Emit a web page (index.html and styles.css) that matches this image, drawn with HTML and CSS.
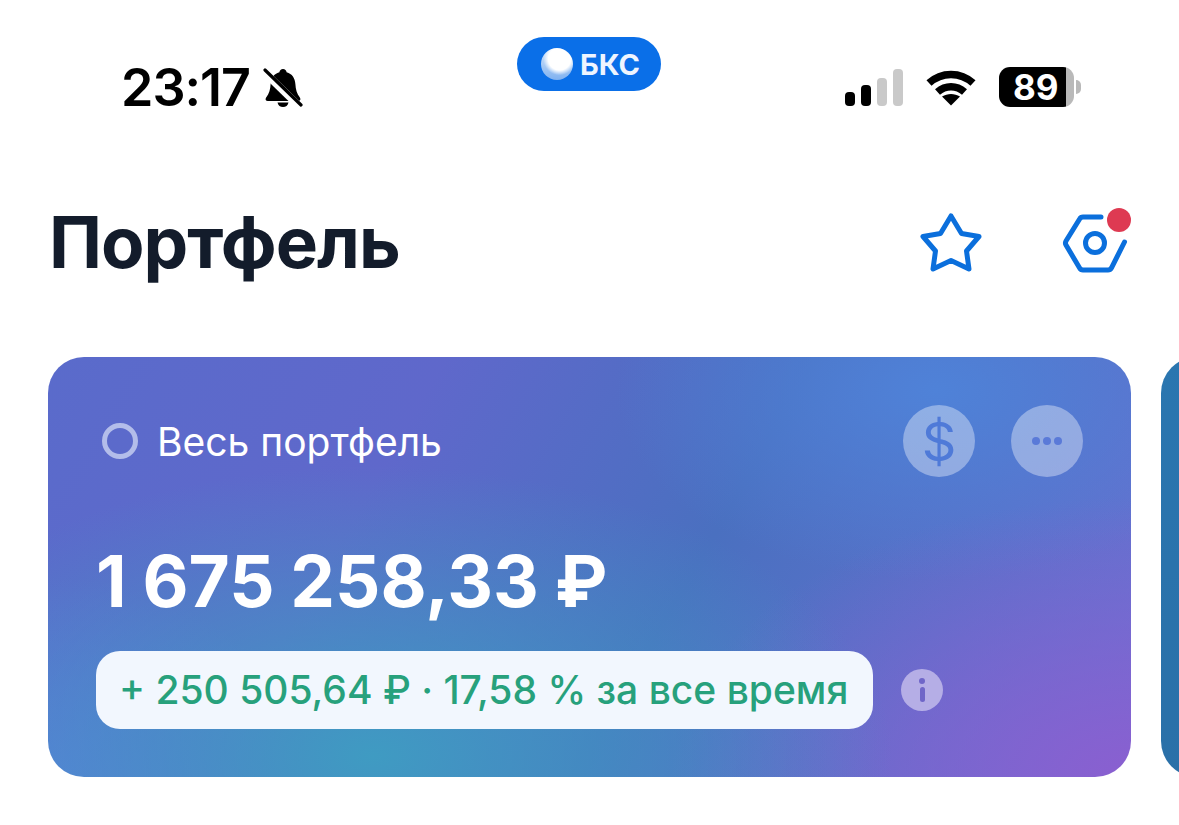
FILE: index.html
```html
<!DOCTYPE html>
<html lang="ru">
<head>
    <meta charset="UTF-8">
    <meta name="viewport" content="width=device-width, initial-scale=1.0">
    <title>Портфель</title>
    <link rel="stylesheet" href="styles.css">
</head>
<body>
    <div class="status-bar">
        <div class="status-left">
            <span class="time">23:17</span>
            <svg class="bell" viewBox="0 0 40 40" width="40" height="40">
                <path d="M20 1c2 0 3.400 1.400 3.600 3.300 5.600 1.500 8.400 6 8.800 12 .3 5 1.200 9 4.600 13.500 1 1.500.2 3.200-1.800 3.200H4.800c-2 0-2.800-1.700-1.800-3.200 3.400-4.500 4.300-8.500 4.600-13.500.4-6 3.200-10.500 8.800-12C16.600 2.400 18 1 20 1z" fill="#000"/>
                <path d="M14.500 34.500h11c-.6 3-2.800 4.500-5.500 4.500s-4.900-1.500-5.500-4.500z" fill="#000"/>
                <path d="M1 4l34 33" stroke="#fff" stroke-width="7.500"/>
                <path d="M2 2l36 35" stroke="#000" stroke-width="3.200" stroke-linecap="round"/>
            </svg>
        </div>
        <div class="app-pill">
            <span class="pill-ball"></span>
            <span class="pill-label">БКС</span>
        </div>
        <div class="status-right">
            <div class="signal">
                <span class="bar bar-1"></span>
                <span class="bar bar-2"></span>
                <span class="bar bar-3"></span>
                <span class="bar bar-4"></span>
            </div>
            <svg class="wifi" viewBox="0 0 50 38" width="50" height="38">
                <path d="M3 15C15.500 3.500 34.500 3.500 47 15" fill="none" stroke="#000" stroke-width="7.500"/>
                <path d="M11.500 24c8-7 19-7 27 0" fill="none" stroke="#000" stroke-width="7.500"/>
                <path d="M25 37.500l-9-9c5.500-3.500 12.500-3.500 18 0z" fill="#000"/>
            </svg>
            <div class="battery">
                <div class="battery-body"><span class="battery-level">89</span></div>
                <span class="battery-cap"></span>
            </div>
        </div>
    </div>

    <div class="page-head">
        <h1 class="page-title">Портфель</h1>
        <div class="head-actions">
            <svg class="star" viewBox="0 0 66 62" width="66" height="62">
                <path d="M33 5L43.500 22.500 61 25.500 48.500 40 51 58 33 49.500 15 58 17.500 40 5 25.500 22.500 22.500z" fill="none" stroke="#0b6fdc" stroke-width="5" stroke-linejoin="round"/>
            </svg>
            <div class="settings">
                <svg viewBox="0 0 68 62" width="68" height="62">
                    <path d="M41 6H23a4 4 0 0 0-3.400 2L6 30a4 4 0 0 0 0 4l13.600 23a4 4 0 0 0 3.400 2h25a4 4 0 0 0 3.400-2L64.500 31" fill="none" stroke="#0b6fdc" stroke-width="5" stroke-linecap="round"/>
                    <circle cx="35" cy="32" r="9.500" fill="none" stroke="#0b6fdc" stroke-width="5"/>
                </svg>
                <span class="notify-dot"></span>
            </div>
        </div>
    </div>

    <div class="cards">
        <div class="card">
            <div class="card-top">
                <div class="card-name">
                    <span class="ring"></span>
                    <span>Весь портфель</span>
                </div>
                <div class="card-buttons">
                    <div class="round-btn currency">$</div>
                    <div class="round-btn dots"><i></i><i></i><i></i></div>
                </div>
            </div>
            <div class="amount">1 675 258,33 ₽</div>
            <div class="profit-row">
                <div class="profit">+ 250 505,64 ₽ · 17,58 % за все время</div>
                <div class="info"><span class="info-dot"></span><span class="info-stem"></span></div>
            </div>
        </div>
        <div class="card-next"></div>
    </div>
</body>
</html>
```

FILE: styles.css
```css
* {
    box-sizing: border-box;
}

html, body {
    height: 100%;
}

body {
    margin: 0;
    background: #fff;
    font-family: Inter, "Noto Sans", sans-serif;
    color: #131c2b;
    overflow: hidden;
}

/* status bar */
.status-bar {
    display: flex;
    align-items: flex-start;
    height: 152px;
    padding: 37px 98px 0 121px;
}

.status-left {
    display: flex;
    align-items: center;
    gap: 13px;
    width: 396px;
    margin-top: 24px;
}

.time {
    font-size: 52px;
    line-height: 54px;
    font-weight: 600;
    color: #000;
    letter-spacing: -1px;
}

.app-pill {
    display: flex;
    align-items: center;
    gap: 7px;
    width: 144px;
    height: 54px;
    padding-left: 24px;
    border-radius: 27px;
    background: #0a6fe8;
}

.pill-ball {
    width: 32px;
    height: 32px;
    border-radius: 50%;
    background:
        radial-gradient(circle at 58% 34%, #fff 0 40%, rgba(255, 255, 255, 0) 58%),
        linear-gradient(180deg, #d8e8fb 0%, #7fb1f0 100%);
}

.pill-label {
    font-size: 29px;
    font-weight: 700;
    color: #eef5ff;
}

.status-right {
    display: flex;
    align-items: center;
    gap: 23px;
    margin-top: 30px;
    margin-left: auto;
}

.signal {
    display: flex;
    align-items: flex-end;
    gap: 6px;
    height: 37px;
}

.bar {
    width: 10px;
    border-radius: 4px;
}

.bar-1 { height: 14px; background: #000; }
.bar-2 { height: 21px; background: #000; }
.bar-3 { height: 28px; background: #c9c9c9; }
.bar-4 { height: 37px; background: #c9c9c9; }

.battery {
    display: flex;
    align-items: center;
    gap: 2px;
}

.battery-body {
    width: 75px;
    height: 40px;
    border-radius: 11px;
    background: linear-gradient(90deg, #000 0 89%, #b9b9b9 89%);
    display: flex;
    align-items: center;
    padding-left: 14px;
}

.battery-level {
    font-size: 35px;
    font-weight: 700;
    color: #fff;
}

.battery-cap {
    width: 5px;
    height: 14px;
    border-radius: 0 7px 7px 0;
    background: #b9b9b9;
}

/* heading */
.page-head {
    display: flex;
    justify-content: space-between;
    align-items: center;
    height: 205px;
    padding: 0 51px 26px 49px;
}

.page-title {
    margin: 0;
    font-size: 71px;
    line-height: 80px;
    font-weight: 700;
    letter-spacing: -1px;
}

.head-actions {
    display: flex;
    align-items: center;
    gap: 76px;
}

.settings {
    position: relative;
    height: 62px;
}

.notify-dot {
    position: absolute;
    top: -3px;
    right: -3px;
    width: 24px;
    height: 24px;
    border-radius: 50%;
    background: #de3a52;
}

/* cards */
.cards {
    display: flex;
    gap: 30px;
    padding-left: 48px;
}

.card {
    flex: 0 0 1083px;
    height: 420px;
    padding: 48px;
    border-radius: 36px;
    color: #fff;
    background:
        radial-gradient(ellipse 520px 290px at 30% 95%, #3f9bc2 0%, rgba(63, 155, 194, 0.55) 45%, rgba(63, 155, 194, 0) 100%),
        radial-gradient(ellipse 260px 200px at 0% 100%, #5b7bda 0%, rgba(91, 123, 218, 0) 100%),
        radial-gradient(ellipse 460px 280px at 100% 100%, #8a5fd0 0%, rgba(138, 95, 208, 0) 100%),
        radial-gradient(ellipse 320px 190px at 82% 8%, #4f82d8 0%, rgba(79, 130, 216, 0) 100%),
        linear-gradient(120deg, #5a6bcb 0%, #5f68cb 30%, #4a70c0 58%, #6a72d4 100%);
}

.card-next {
    flex: 0 0 60px;
    height: 420px;
    border-radius: 36px 0 0 36px;
    background: linear-gradient(180deg, #2a76b0 0%, #2a70a8 100%);
}

.card-top {
    display: flex;
    justify-content: space-between;
    align-items: center;
}

.card-name {
    display: flex;
    align-items: center;
    gap: 19px;
    padding-left: 6px;
    font-size: 39px;
    font-weight: 400;
}

.ring {
    width: 36px;
    height: 36px;
    border: 5px solid #b3bdea;
    border-radius: 50%;
}

.card-buttons {
    display: flex;
    gap: 36px;
}

.round-btn {
    display: flex;
    align-items: center;
    justify-content: center;
    width: 72px;
    height: 72px;
    border-radius: 50%;
    background: rgba(255, 255, 255, 0.37);
}

.currency {
    font-size: 54px;
    font-weight: 400;
    color: #4f7ad8;
}

.dots {
    gap: 3px;
}

.dots i {
    width: 8px;
    height: 8px;
    border-radius: 50%;
    background: #5a7ad8;
}

.amount {
    margin-top: 64px;
    font-size: 71px;
    line-height: 80px;
    font-weight: 700;
    word-spacing: -1px;
    white-space: nowrap;
}

.profit-row {
    display: flex;
    align-items: center;
    gap: 28px;
    margin-top: 30px;
}

.profit {
    width: 777px;
    height: 78px;
    padding-left: 23px;
    border-radius: 24px;
    background: #f2f7fe;
    color: #27a17c;
    font-size: 39px;
    font-weight: 500;
    line-height: 78px;
    white-space: nowrap;
}

.info {
    display: flex;
    flex-direction: column;
    align-items: center;
    justify-content: center;
    gap: 3px;
    width: 42px;
    height: 42px;
    border-radius: 50%;
    background: #b5aee6;
}

.info-dot {
    width: 6px;
    height: 6px;
    border-radius: 50%;
    background: #6f66c8;
}

.info-stem {
    width: 5px;
    height: 15px;
    border-radius: 3px;
    background: #6f66c8;
}
```
